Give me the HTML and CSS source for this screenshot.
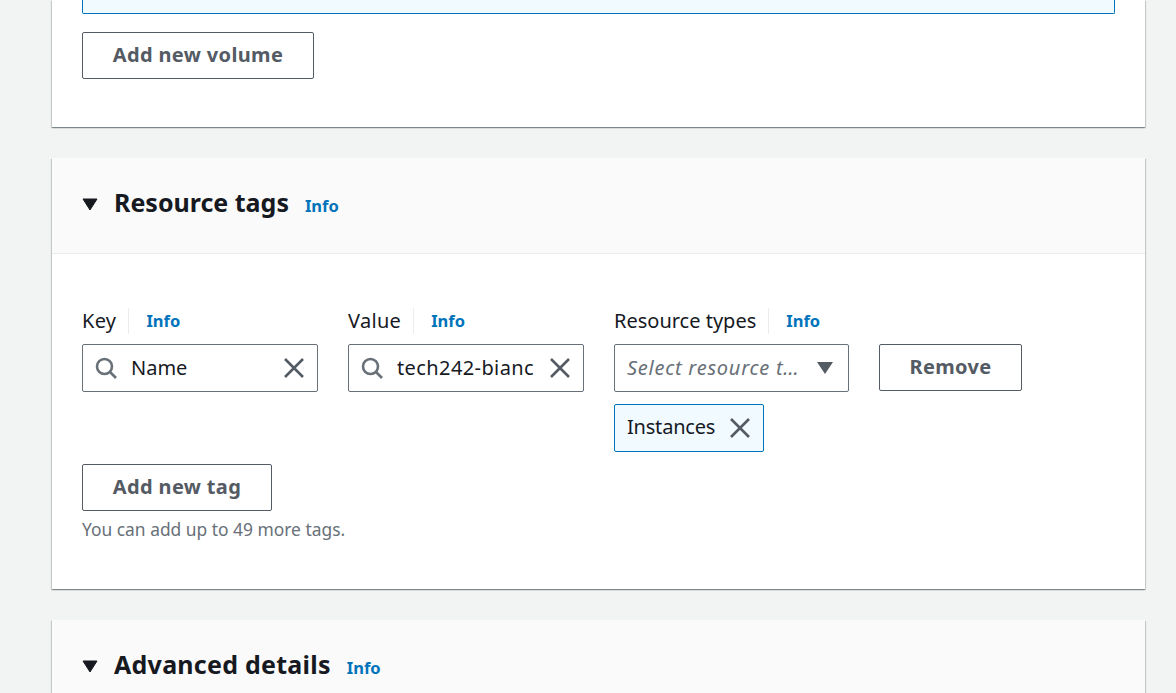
FILE: index.html
```html
<!DOCTYPE html>
<html lang="en">
<head>
  <meta charset="UTF-8">
  <title>Launch an instance</title>
  <link rel="stylesheet" href="styles.css">
</head>
<body>
  <div id="container">
    <section class="card card-top">
      <div class="volume-alert"></div>
      <button class="btn btn-volume">Add new volume</button>
    </section>

    <section class="card card-tags">
      <div class="card-header">
        <svg class="caret" viewBox="0 0 16 13"><path d="M1 1h14L8 12z"/></svg>
        <h2>Resource tags</h2>
        <a class="info info-head">Info</a>
      </div>
      <div class="card-body">
        <div class="tag-row">
          <div class="field field-key">
            <div class="field-label"><span class="label-wide">Key</span><i class="divider"></i><a class="info">Info</a></div>
            <div class="input">
              <svg class="icon-search" viewBox="0 0 22 22"><circle cx="9.5" cy="9.5" r="7.5"/><path d="M15 15l6 6"/></svg>
              <span class="input-text">Name</span>
              <svg class="icon-x" viewBox="0 0 20 20"><path d="M1 1l18 18M19 1L1 19"/></svg>
            </div>
          </div>
          <div class="field field-value">
            <div class="field-label"><span class="label-wide">Value</span><i class="divider"></i><a class="info">Info</a></div>
            <div class="input">
              <svg class="icon-search" viewBox="0 0 22 22"><circle cx="9.5" cy="9.5" r="7.5"/><path d="M15 15l6 6"/></svg>
              <span class="input-text input-long">tech242-bianc</span>
              <svg class="icon-x" viewBox="0 0 20 20"><path d="M1 1l18 18M19 1L1 19"/></svg>
            </div>
          </div>
          <div class="field field-types">
            <div class="field-label"><span>Resource types</span><i class="divider"></i><a class="info">Info</a></div>
            <div class="input select">
              <span class="placeholder">Select resource t…</span>
              <svg class="caret-small" viewBox="0 0 16 12"><path d="M0 0h16L8 12z"/></svg>
            </div>
            <div class="token">
              <span class="token-text">Instances</span>
              <svg class="icon-x" viewBox="0 0 20 20"><path d="M1 1l18 18M19 1L1 19"/></svg>
            </div>
          </div>
          <button class="btn btn-remove">Remove</button>
        </div>
        <button class="btn btn-tag">Add new tag</button>
        <p class="hint">You can add up to 49 more tags.</p>
      </div>
    </section>

    <section class="card card-advanced">
      <div class="card-header">
        <svg class="caret" viewBox="0 0 16 13"><path d="M1 1h14L8 12z"/></svg>
        <h2>Advanced details</h2>
        <a class="info info-head">Info</a>
      </div>
    </section>
  </div>
</body>
</html>
```

FILE: styles.css
```css
html, body {
  height: 693px;
  overflow: hidden;
}

body {
  margin: 0;
  background: #f2f3f3;
  font-family: "Noto Sans", sans-serif;
  color: #16191f;
  font-size: 18px;
}

#container {
  width: 1093px;
  margin-left: 52px;
}

.card {
  background: #fff;
  box-shadow: 0 1px 1px 0 rgba(0,28,36,0.3), 1px 1px 1px 0 rgba(0,28,36,0.15), -1px 1px 1px 0 rgba(0,28,36,0.15);
  margin-bottom: 31px;
}

.card-top {
  height: 127px;
  padding: 0 30px;
  box-sizing: border-box;
}

.volume-alert {
  height: 13px;
  background: #f1faff;
  border: 1px solid #0073bb;
  border-top: none;
  border-radius: 0 0 2px 2px;
  margin-bottom: 18px;
}

.btn {
  display: block;
  box-sizing: border-box;
  background: #fff;
  border: 1px solid #545b64;
  border-radius: 2px;
  color: #545b64;
  font-family: inherit;
  font-size: 20px;
  font-weight: 700;
  letter-spacing: 0.35px;
  padding: 0 0 2px;
}

.btn-volume {
  width: 232px;
  height: 47px;
}

.card-header {
  height: 87px;
  padding: 0 0 8px 30px;
  background: #fafafa;
  border-bottom: 1px solid #eaeded;
  display: flex;
  align-items: center;
}

.card-header h2 {
  margin: 0 0 0 16px;
  font-size: 25px;
  font-weight: 700;
  line-height: 32px;
}

.card-advanced h2 {
  letter-spacing: 0.25px;
}

.caret {
  width: 16px;
  height: 13px;
  fill: #16191f;
  stroke: #16191f;
  stroke-width: 1;
  stroke-linejoin: round;
  margin-top: 6px;
}

.info {
  color: #0073bb;
  font-size: 16.5px;
  font-weight: 700;
}

.info-head {
  margin-left: 16px;
  padding-top: 7px;
}

.card-body {
  padding: 51px 30px 0;
  height: 284px;
}

.tag-row {
  display: flex;
  gap: 30px;
  align-items: flex-start;
  margin-bottom: 12px;
}

.field-key, .field-value {
  width: 236px;
}

.field-types {
  width: 235px;
}

.field-label {
  display: flex;
  align-items: center;
  height: 26px;
  padding-top: 3px;
  margin-bottom: 10px;
  font-size: 20px;
}

.field-label span, .field-label a {
  padding-bottom: 2px;
}

.label-wide {
  letter-spacing: 0.3px;
}

.divider {
  width: 1px;
  height: 26px;
  background: #eaeded;
  margin: 0 17px 0 12px;
}

.input {
  height: 48px;
  box-sizing: border-box;
  border: 1px solid #687078;
  border-radius: 2px;
  display: flex;
  align-items: center;
  padding: 0 13px 0 12px;
  background: #fff;
  font-size: 20px;
}

.icon-search {
  width: 22px;
  height: 22px;
  flex: none;
  fill: none;
  stroke: #687078;
  stroke-width: 2.6;
  margin-right: 14px;
}

.input-text {
  flex: 1;
  white-space: nowrap;
  overflow: hidden;
  padding-bottom: 2px;
}

.input-long {
  letter-spacing: 0.4px;
}

.icon-x {
  width: 20px;
  height: 20px;
  flex: none;
  fill: none;
  stroke: #545b64;
  stroke-width: 2.6;
}

.select {
  justify-content: space-between;
  padding-right: 15px;
}

.placeholder {
  color: #687078;
  font-style: italic;
  white-space: nowrap;
  letter-spacing: 0.75px;
  padding-bottom: 2px;
}

.caret-small {
  width: 16px;
  height: 12px;
  fill: #545b64;
}

.token {
  display: inline-flex;
  align-items: center;
  gap: 15px;
  box-sizing: border-box;
  height: 48px;
  margin-top: 12px;
  padding: 0 13px 0 12px;
  background: #f1faff;
  border: 1px solid #0073bb;
  border-radius: 2px;
  font-size: 20px;
}

.token-text {
  letter-spacing: -0.2px;
  padding-bottom: 4px;
}

.btn-remove {
  width: 143px;
  height: 47px;
  margin-top: 39px;
}

.btn-tag {
  width: 190px;
  height: 47px;
}

.hint {
  margin: 6px 0 0;
  font-size: 17.4px;
  line-height: 24px;
  color: #687078;
}

.card-advanced {
  margin-bottom: 0;
}
```
